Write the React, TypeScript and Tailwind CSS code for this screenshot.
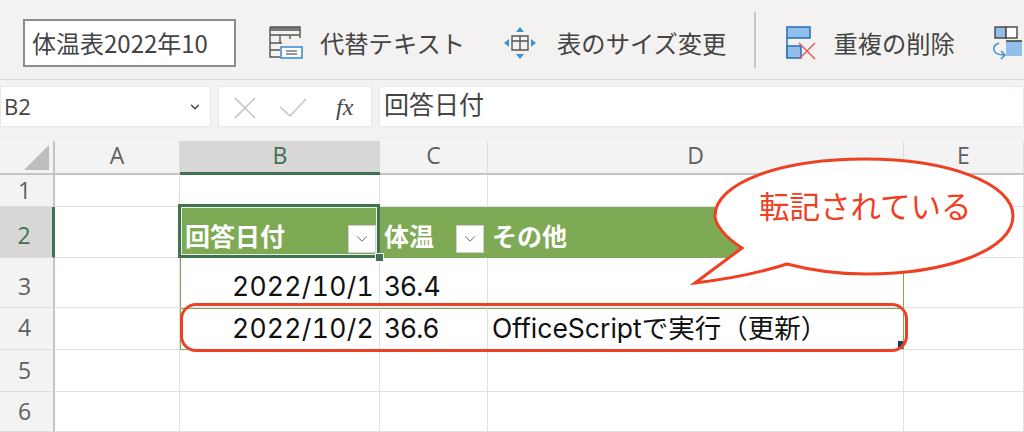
import { ChevronDown } from "lucide-react"

const jp = "font-['Noto_Sans_CJK_JP',sans-serif]"

function AltTextIcon() {
    return <svg width="36" height="34" viewBox="0 0 36 34" fill="none" className="shrink-0">
        <rect x="1" y="1" width="30" height="4" fill="#7a7a7a" />
        <path d="M1 1H31V12M1 1V31H11M1 9H31M1 17H13M1 24H11M11 9V17M21 9V13" stroke="#555" strokeWidth="1.4" />
        <rect x="12" y="21" width="21" height="11" fill="#fff" stroke="#3f8fd8" strokeWidth="1.6" />
        <path d="M17 25H28M17 28H28" stroke="#777" strokeWidth="1.3" />
    </svg>
}

function ResizeIcon() {
    return <svg width="34" height="34" viewBox="0 0 34 34" fill="none" className="shrink-0">
        <path d="M9 10H25V24H9ZM9 15H25M17 10V24" stroke="#555" strokeWidth="1.4" />
        <path d="M17 1L21 6H13ZM17 33L13 28H21ZM1 17L6 13V21ZM33 17L28 21V13Z" fill="#3f8fd8" />
    </svg>
}

function DedupeIcon() {
    return <svg width="32" height="34" viewBox="0 0 32 34" fill="none" className="shrink-0">
        <rect x="1" y="1" width="23" height="11" fill="#92bfea" stroke="#2f74bd" strokeWidth="1.6" />
        <path d="M1 12V32" stroke="#2f74bd" strokeWidth="1.6" />
        <rect x="1" y="20" width="14" height="12" fill="#92bfea" stroke="#2f74bd" strokeWidth="1.6" />
        <path d="M13 33L29 17M13 17L29 33" stroke="#e25c58" strokeWidth="1.5" />
    </svg>
}

function ConvertIcon() {
    return <svg width="30" height="34" viewBox="0 0 30 34" fill="none" className="shrink-0">
        <rect x="3" y="1" width="11" height="11" fill="#92bfea" stroke="#444" strokeWidth="1.4" />
        <rect x="14" y="1" width="11" height="11" fill="#fff" stroke="#444" strokeWidth="1.4" />
        <rect x="14" y="15" width="16" height="15" fill="#92bfea" />
        <path d="M14 15H30" stroke="#444" strokeWidth="1.6" />
        <path d="M7 17C-1 20 0 29 12 29M9 25L13 29L9 33" stroke="#3f8fd8" strokeWidth="1.5" />
    </svg>
}

function ToolbarButton({ icon, label, className }: { icon: React.ReactNode, label: string, className: string }) {
    return <div className={`flex items-center shrink-0 ${className}`}>
        {icon}
        <span className={`text-[24.3px] text-[#444] leading-none whitespace-nowrap ${jp}`}>{label}</span>
    </div>
}

function Toolbar() {
    return <div className="flex items-center h-[80px] bg-[#f3f2f1] border-b border-[#dad9d7] pl-[23px] pt-[7px] overflow-hidden">
        <div className={`w-[213px] h-[48px] shrink-0 bg-white border-2 border-[#8f8d8b] flex items-center pl-[7px] text-[24px] text-[#444] whitespace-nowrap ${jp}`}>
            体温表2022年10
        </div>
        <ToolbarButton icon={<AltTextIcon />} label="代替テキスト" className="ml-[33px] gap-[15px]" />
        <ToolbarButton icon={<ResizeIcon />} label="表のサイズ変更" className="ml-[38px] gap-[20px]" />
        <div className="w-[2px] h-[56px] bg-[#c8c6c4] ml-[28px] shrink-0 -mt-[7px]" />
        <ToolbarButton icon={<DedupeIcon />} label="重複の削除" className="ml-[30px] gap-[15px]" />
        <div className="ml-[37px] shrink-0"><ConvertIcon /></div>
    </div>
}

function FormulaBar() {
    return <div className="flex h-[61px] bg-[#f3f2f1] pt-[6px] pb-[14px] gap-[7px]">
        <div className="w-[211px] bg-white border border-[#e9e8e7] flex items-center justify-between pl-[3px] pr-[8px]">
            <span className="font-['Open_Sans',sans-serif] text-[22px] text-[#444]">B2</span>
            <ChevronDown size={14} strokeWidth={2.5} color="#444" />
        </div>
        <div className="w-[154px] bg-white border border-[#e9e8e7] flex items-center gap-[22px] pl-[13px]">
            <svg width="24" height="24" viewBox="0 0 24 24" fill="none" stroke="#c4c4c4" strokeWidth="1.6"><path d="M3 3L23 23M23 3L3 23" /></svg>
            <svg width="30" height="24" viewBox="0 0 30 24" fill="none" stroke="#c4c4c4" strokeWidth="1.6"><path d="M2 12L12 21L28 4" /></svg>
            <span className="font-['Liberation_Serif',serif] italic text-[24px] leading-none text-[#444] ml-[6px]">fx</span>
        </div>
        <div className={`flex-1 bg-white border border-[#e9e8e7] flex items-center pl-[4px] pb-[5px] text-[25px] text-[#444] ${jp}`}>回答日付</div>
    </div>
}

function ColHead({ label, active }: { label: string, active?: boolean }) {
    return <div className={`flex items-center justify-center font-['Open_Sans',sans-serif] text-[23px] border-b-2 pb-[3px] ${active
        ? "bg-[#d8d7d5] text-[#3f7350] border-b-[#3f7350] border-b-[3px]"
        : "bg-[#f3f3f3] text-[#5f5f5f] border-[#c4c4c4] border-r border-r-[#dedede]"}`}>{label}</div>
}

function RowHead({ label, active, className = "" }: { label: string, active?: boolean, className?: string }) {
    return <div className={`flex items-center justify-center pr-[4px] font-['Open_Sans',sans-serif] text-[23px] border-b border-b-[#dedede] ${className} ${active
        ? "bg-[#d8d7d5] text-[#3f7350] border-r-[3px] border-r-[#3f7350]"
        : "bg-[#f3f3f3] text-[#5f5f5f] border-r-2 border-r-[#c4c4c4]"}`}>{label}</div>
}

function Cell({ children, className = "" }: { children?: React.ReactNode, className?: string }) {
    return <div className={`relative border-r border-b border-[#e0e0e0] flex items-center whitespace-nowrap ${className}`}>{children}</div>
}

function FilterButton() {
    return <div className="absolute right-[3px] bottom-[4px] w-[28px] h-[28px] bg-white border border-[#d0d0d0] flex items-center justify-center">
        <ChevronDown size={18} strokeWidth={1.2} color="#555" />
    </div>
}

const headCell = `bg-[#7faa55] !border-[#7faa55] text-white font-bold text-[25px] ${jp}`
const dataCell = "text-[26.5px] text-[#111] font-['Inter','Noto_Sans_CJK_JP',sans-serif]"
const dateCell = "justify-end pr-[5px] tabular-nums tracking-[0.3px] border-l border-l-[#7faa55]"

function Sheet() {
    return <div className="grid grid-cols-[55px_125px_200px_108px_416px_120px] grid-rows-[34px_32px_51px_50px_42px_42px_40px]">
        {/* ヘッダー */}
        <div className="relative bg-[#f3f3f3] border-b-2 border-r-2 border-[#c4c4c4]">
            <svg width="28" height="28" viewBox="0 0 28 28" className="absolute left-[23px] top-[3px]"><path d="M26 1V26H1Z" fill="#bdbdbd" /></svg>
        </div>
        <ColHead label="A" />
        <ColHead label="B" active />
        <ColHead label="C" />
        <ColHead label="D" />
        <ColHead label="E" />

        <RowHead label="1" />
        <Cell /><Cell /><Cell /><Cell /><Cell />

        <RowHead label="2" active className="pt-[6px]" />
        <Cell />
        <Cell className={`${headCell} pt-[7px] pl-[5px]`}>
            回答日付
            <FilterButton />
            {/* 選択枠 */}
            <div className="absolute -left-[2px] -top-[3px] -right-[1px] -bottom-[1px] border-[3px] border-[#3f7350] pointer-events-none">
                <div className="w-full h-full border border-[#e8f0df]" />
            </div>
            <div className="absolute z-10 -right-[5px] -bottom-[5px] w-[9px] h-[9px] bg-[#3f7350] border border-white" />
        </Cell>
        <Cell className={`${headCell} pt-[7px] pl-[4px]`}>
            体温
            <FilterButton />
        </Cell>
        <Cell className={`${headCell} pt-[7px] pl-[4px]`}>その他</Cell>
        <Cell />

        <RowHead label="3" className="pt-[8px]" />
        <Cell />
        <Cell className={`${dataCell} ${dateCell} pt-[9px]`}>2022/10/1</Cell>
        <Cell className={`${dataCell} pl-[4px] pt-[9px]`}>36.4</Cell>
        <Cell className="!border-r-[#7faa55]" />
        <Cell />

        <RowHead label="4" className="pb-[3px]" />
        <Cell />
        <Cell className={`${dataCell} ${dateCell} border-t border-t-[#7faa55] !border-b-[#7faa55]`}>2022/10/2</Cell>
        <Cell className={`${dataCell} pl-[4px] border-t border-t-[#7faa55]`}>36.6</Cell>
        <Cell className={`${dataCell} pl-[4px] !border-r-[#7faa55] border-t border-t-[#7faa55]`}>
            OfficeScriptで実行（更新）
            <div className="absolute right-0 bottom-0 w-[5px] h-[8px] bg-[#1f3a5f]" />
        </Cell>
        <Cell />

        <RowHead label="5" />
        <Cell /><Cell /><Cell /><Cell /><Cell />

        <RowHead label="6" />
        <Cell /><Cell /><Cell /><Cell /><Cell />
    </div>
}

export default function App() {
    return <div className="relative w-[1024px] h-[432px] overflow-hidden bg-white">
        <Toolbar />
        <FormulaBar />
        <Sheet />

        {/* 赤い注釈 */}
        <div className="absolute left-[180px] top-[303px] w-[728px] h-[49px] border-[3px] border-[#ee4023] rounded-[16px]" />
        <svg width="340" height="140" viewBox="0 0 340 140" className="absolute left-[690px] top-[150px]">
            <path
                d="M52 98C33 86 25 73 25 66C25 33 90 9 175 9C257 9 323 33 323 66C323 100 257 124 175 124C145 124 120 120 97 114C75 121 40 129 5 133Z"
                fill="#fff" stroke="#ee4023" strokeWidth="3"
            />
        </svg>
        <div className={`absolute left-[759px] top-[180px] text-[30.5px] leading-[50px] text-[#ee4023] whitespace-nowrap ${jp}`}>転記されている</div>
    </div>
}
